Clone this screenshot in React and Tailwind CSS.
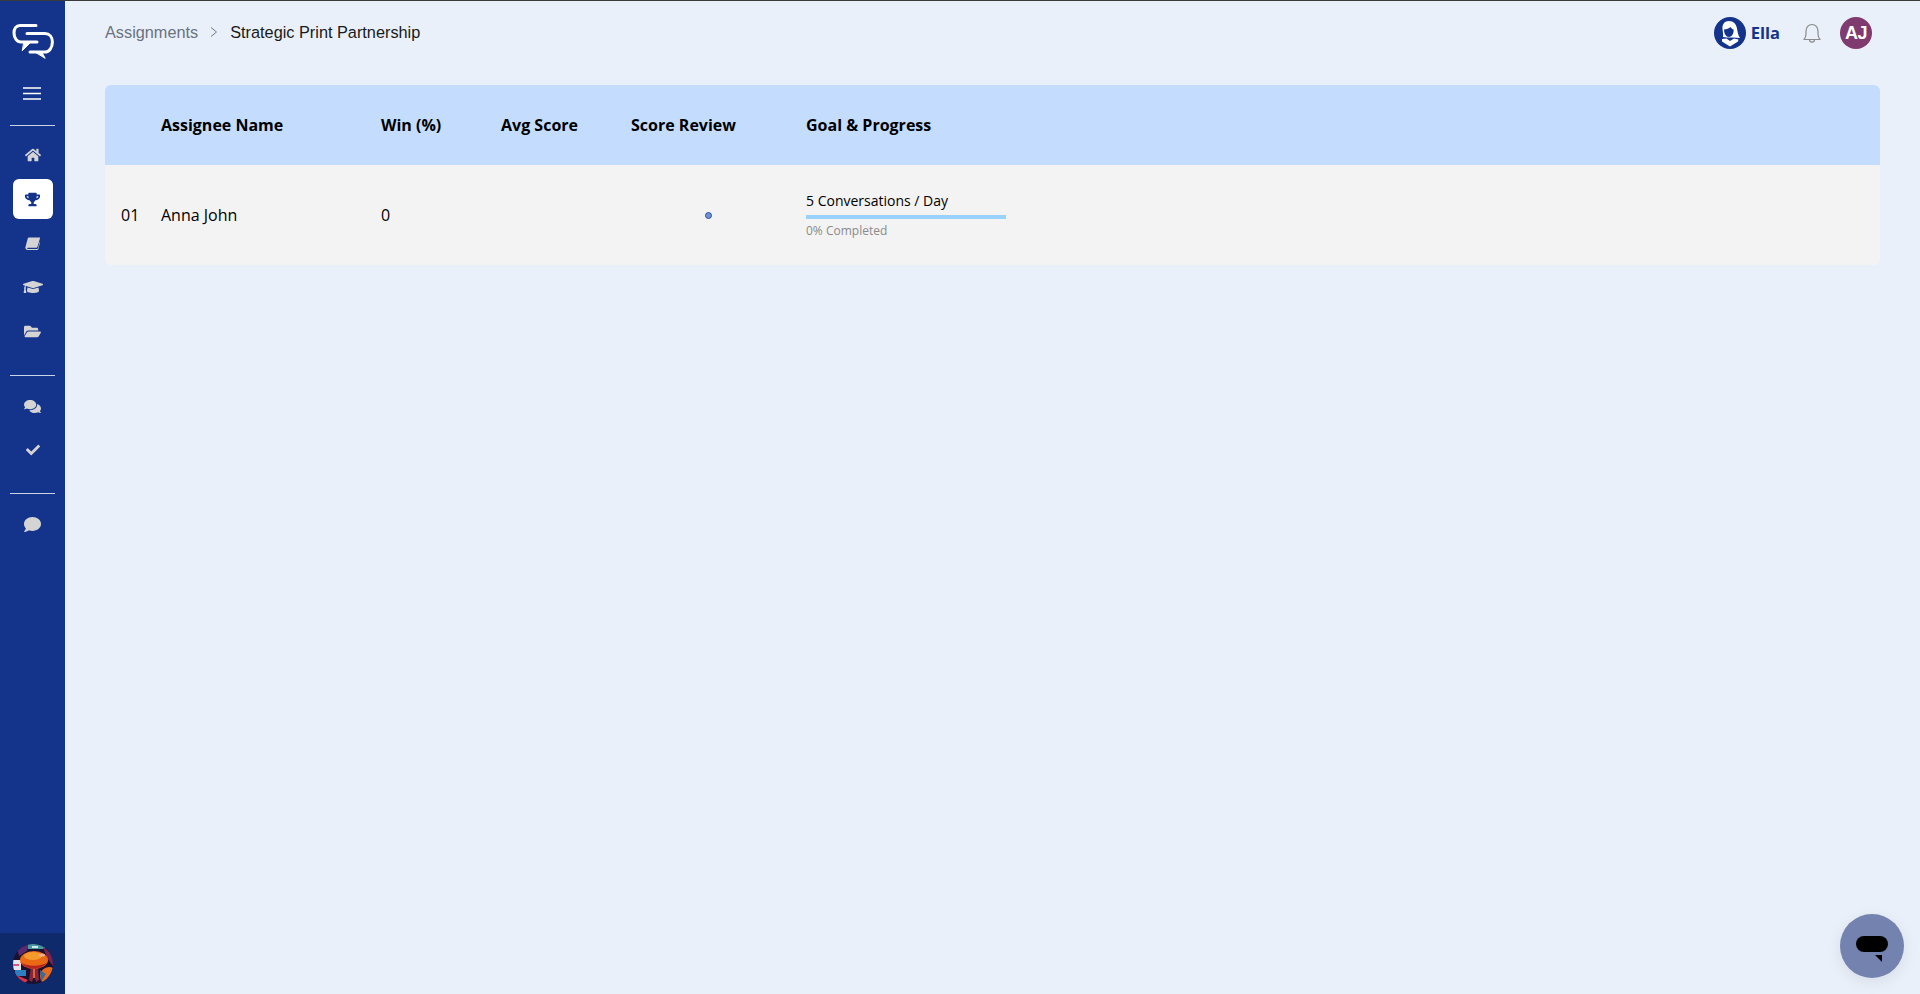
import React from "react";
import { FaHome, FaTrophy, FaGraduationCap, FaFolderOpen, FaComments, FaCheck, FaComment } from "react-icons/fa";

const Divider = () => <div className="mx-auto h-px w-[45px] shrink-0 bg-[#c9d3ea]" />;

const BookIcon = ({ style }) => (
  <svg style={style} viewBox="0 0 16 14">
    <path d="M4 0.500 H15.500 C16 0.500 16.200 1 16 1.500 L13.200 10.800 C13 11.300 12.700 11.500 12.200 11.500 H3 C2 11.500 2 12.800 3 12.800 H12.800 C13.300 12.800 13.600 12.500 13.800 12 L15.500 5.500 L16 6 L14.200 12.800 C14 13.500 13.500 14 12.800 14 H2.800 C1 14 0 12.500 0.500 10.800 L3 1.500 C3.200 0.800 3.500 0.500 4 0.500 Z" fill="currentColor" />
  </svg>
);

const NavIcon = ({ icon: Icon, size = 14, active = false, className = "" }) => (
  <div className={`mx-auto flex h-10 w-10 shrink-0 items-center justify-center rounded-md ${active ? "bg-white text-[#14348c]" : "text-[#d4d4d4]"} ${className}`}>
    <Icon style={{ width: size, height: size }} />
  </div>
);

const Logo = () => (
  <svg width="42" height="37" viewBox="0 0 42 37" fill="none" stroke="#fff" strokeWidth="3" strokeLinejoin="round" strokeLinecap="round">
    <path d="M24 2.500 H8 C4 2.500 2 6 2 10 C2 15 5 19 9 19 H25" />
    <path d="M15 10.500 H33 C37.500 10.500 40.400 14 40.400 19 C40.400 25 37 29 33 29 H18" />
    <path d="M12 20 L18 20 L10.500 27.500 Z" fill="#fff" strokeWidth="1" />
    <path d="M24 29.500 L30 29.500 L33 35 Z" fill="#fff" strokeWidth="1" />
  </svg>
);

const Ella = () => (
  <svg width="32" height="32" viewBox="0 0 32 32">
    <circle cx="16" cy="16" r="16" fill="#14348c" />
    <path d="M15 4 C10.500 4 8 7.500 8.500 12 C8.800 15 9.500 18 9 20 L13 20.500 H19 L26 21 C24 18 23.500 14.500 23 11.500 C22.300 7 19.500 4 15 4 Z" fill="#fff" />
    <path d="M10 12.500 C12.500 12.500 15 11.500 16.500 10 C17.500 11.500 18.500 12.300 19.700 12.800 C19.700 16.500 18 20 15 20 C12 20 10 16.500 10 12.500 Z" fill="#14348c" />
    <path d="M8 22 L12.500 21.500 L16 24 L20 21.500 L24.500 22.500 L24 24.500 L16 29.500 L8 24.500 Z" fill="#fff" />
  </svg>
);

const Bell = () => (
  <svg width="20" height="21" viewBox="0 0 20 21" fill="none" stroke="#8c8c8c" strokeWidth="1.200" strokeLinejoin="round">
    <path d="M2 16.500 C3.500 15 4 13.500 4 10.500 V8 C4 4.500 6.500 1.500 10 1.500 C13.500 1.500 16 4.500 16 8 V10.500 C16 13.500 16.500 15 18 16.500 Z" />
    <path d="M7.500 16.500 C7.500 20 12.500 20 12.500 16.500" />
  </svg>
);

const Mushroom = () => (
  <svg width="40" height="40" viewBox="0 0 40 40">
    <defs>
      <clipPath id="art"><circle cx="20" cy="20" r="20" /></clipPath>
    </defs>
    <g clipPath="url(#art)">
      <rect width="40" height="40" fill="#1a1030" />
      <path d="M4 4 L16 0 L14 7 L6 12 Z" fill="#5a2a6e" />
      <rect x="15" y="0" width="17" height="5" fill="#4b9aa3" />
      <rect x="19" y="2" width="6" height="2" fill="#cfe6ea" />
      <path d="M30 3 L40 10 V22 L34 14 Z" fill="#7a2450" />
      <rect x="0" y="16" width="8" height="10" fill="#e6e4ee" />
      <rect x="0" y="20" width="6" height="2" fill="#d8587a" />
      <rect x="2" y="26" width="11" height="6" fill="#2f7fc0" />
      <path d="M3 31 L15 36 L11 40 H5 Z" fill="#d8344a" />
      <ellipse cx="36" cy="32" rx="9" ry="9" fill="#e86a1c" />
      <path d="M27 26 L33 30 L28 38 Z" fill="#3a6a9a" />
      <path d="M18 23 H25 L26 36 L23 38 L21 31 L19 38 L16 36 Z" fill="#8a2438" />
      <rect x="20" y="25" width="2" height="9" fill="#d8683a" />
      <ellipse cx="21" cy="16" rx="14" ry="9" fill="#ea6a14" />
      <ellipse cx="20" cy="12" rx="9" ry="4" fill="#f59a2e" />
      <ellipse cx="29" cy="11" rx="3" ry="1.500" fill="#f0b090" />
      <path d="M7 18 C14 27 28 27 35 18 C28 23 14 23 7 18 Z" fill="#b8241f" />
    </g>
  </svg>
);

export default function App() {
  return (
    <div className="flex h-[994px] w-full flex-col overflow-hidden bg-[#e9f0fa]" style={{ fontFamily: "'Open Sans', sans-serif" }}>
      <div className="h-px shrink-0 bg-[#3a3a3a]" />
      <div className="flex min-h-0 flex-1">
        <aside className="flex w-[65px] shrink-0 flex-col bg-[#14348c]">
          <div className="flex justify-center pt-[22px]"><Logo /></div>
          <div className="flex justify-center pt-[27px] pb-[25px] pr-px">
            <svg width="18" height="13" viewBox="0 0 18 13" fill="none" stroke="#fff" strokeWidth="1.500"><path d="M0 1h18M0 6.500h18M0 12h18" /></svg>
          </div>
          <Divider />
          <NavIcon icon={FaHome} size={16} className="mt-[9px]" />
          <NavIcon icon={FaTrophy} size={15} active className="mt-[4px]" />
          <NavIcon icon={BookIcon} size={15} className="mt-[4px]" />
          <NavIcon icon={FaGraduationCap} size={20} className="mt-[4px]" />
          <NavIcon icon={FaFolderOpen} size={17} className="mt-[4px]" />
          <div className="mt-[24px]"><Divider /></div>
          <NavIcon icon={FaComments} size={17} className="mt-[10px]" />
          <NavIcon icon={FaCheck} size={14} className="mt-[4px]" />
          <div className="mt-[23px]"><Divider /></div>
          <NavIcon icon={FaComment} size={17} className="mt-[10px]" />
          <div className="mt-auto flex h-[61px] items-center justify-center bg-[#0f2a6b]"><Mushroom /></div>
        </aside>

        <main className="relative min-w-0 flex-1 px-10">
          <header className="flex h-[84px] items-start justify-between">
            <div className="flex items-center pt-[21px] text-[16.300px] leading-[20px]" style={{ fontFamily: "'Liberation Sans', sans-serif" }}>
              <span className="text-[#6b7280]">Assignments</span>
              <svg className="mx-[12px]" width="8" height="12" viewBox="0 0 8 12" fill="none" stroke="#777" strokeWidth="1"><path d="M1 1.500L6.500 6L1 10.500" /></svg>
              <span className="text-[#1a1a1a]">Strategic Print Partnership</span>
            </div>
            <div className="flex items-center pt-[16px] pr-[8px]">
              <Ella />
              <span className="ml-[5px] text-[16.500px] font-bold text-[#14348c]">Ella</span>
              <div className="ml-[22px] flex"><Bell /></div>
              <div className="ml-[18px] flex h-8 w-8 items-center justify-center rounded-full bg-[#7f3a6f] text-lg font-bold tracking-[-0.5px] text-white" style={{ fontFamily: "'Liberation Sans', sans-serif" }}>AJ</div>
            </div>
          </header>

          <div className="overflow-hidden rounded-md">
            <div className="flex h-[80px] items-center bg-[#c4ddfe] text-base font-bold text-black">
              <div className="w-[56px]" />
              <div className="w-[220px]">Assignee Name</div>
              <div className="w-[120px]">Win (%)</div>
              <div className="w-[130px]">Avg Score</div>
              <div className="w-[175px]">Score Review</div>
              <div>Goal &amp; Progress</div>
            </div>
            <div className="flex h-[100px] items-center bg-[#f3f3f3] text-base text-black">
              <div className="w-[56px] pl-4">01</div>
              <div className="w-[220px]">Anna John</div>
              <div className="w-[120px]">0</div>
              <div className="w-[130px]" />
              <div className="flex w-[175px] items-center">
                <div className="ml-[74px] h-[7px] w-[7px] rounded-full border border-[#2f4fa8] bg-[#6f93d0]" />
              </div>
              <div className="flex w-[200px] flex-col">
                <span className="text-sm leading-[20px]">5 Conversations / Day</span>
                <div className="mt-[4px] h-1 w-full bg-[#99d3fd]" />
                <span className="mt-[4px] text-xs leading-[16px] text-[#8a8a8a]">0% Completed</span>
              </div>
            </div>
          </div>

          <button className="absolute right-[16px] bottom-[16px] flex h-16 w-16 items-center justify-center rounded-full bg-[#7382ae] shadow-[0_4px_16px_rgba(0,0,0,0.08)]">
            <svg className="mt-[6px]" width="32" height="26" viewBox="0 0 32 26">
              <rect x="0" y="0" width="32" height="16" rx="8" fill="#000" />
              <path d="M19 19 L26 19 L26 26 Z" fill="#000" />
            </svg>
          </button>
        </main>
      </div>
    </div>
  );
}
